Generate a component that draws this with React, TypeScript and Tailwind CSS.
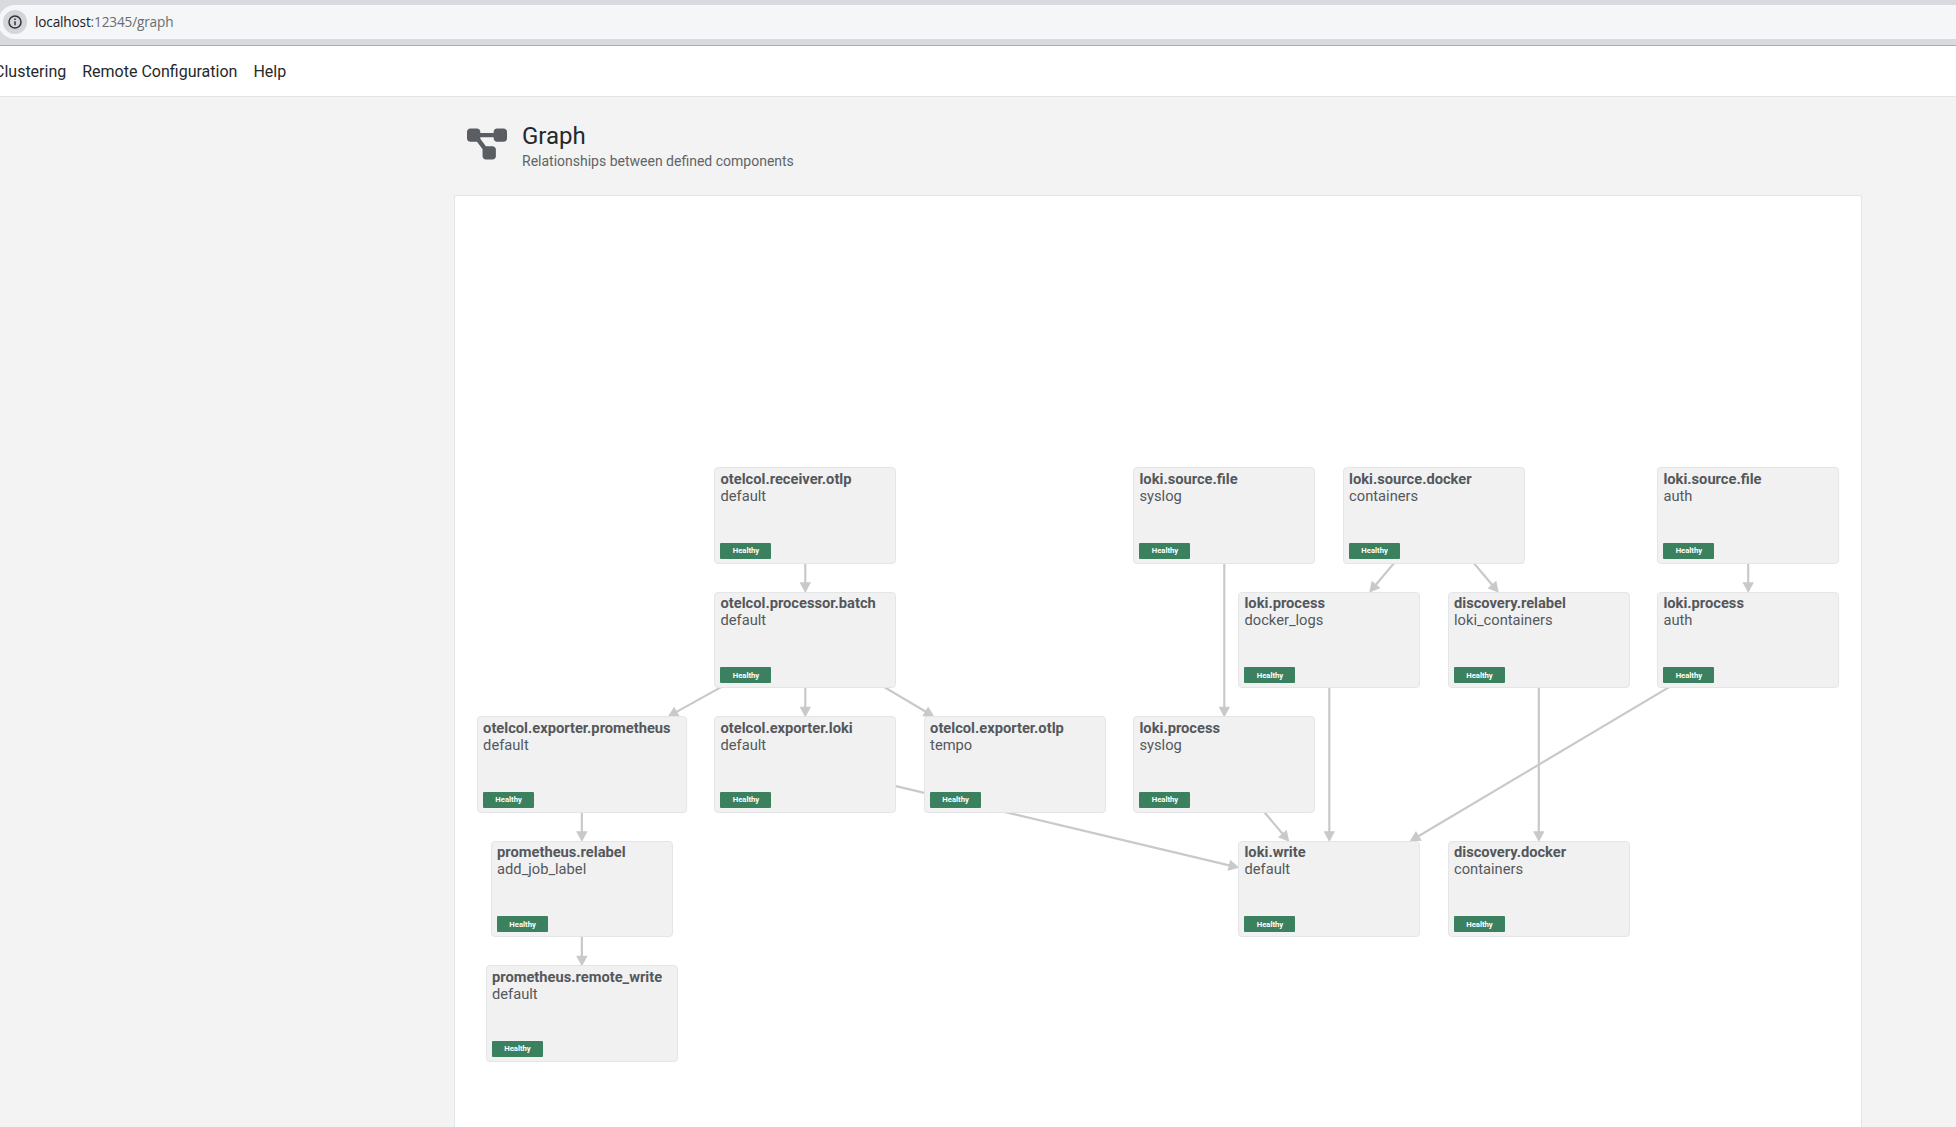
import React from "react";
import { FaDiagramProject } from "react-icons/fa6";

type GraphNode = {
  id: string;
  name: string;
  label: string;
  x: number;
  y: number;
  w: number;
};

const NODE_HEIGHT = 96.7;
const ROWS = [271.3, 395.8, 520.3, 644.8, 769.3];

// Coordinates are relative to the inside of the graph panel.
const nodes: GraphNode[] = [
  { id: "receiver", name: "otelcol.receiver.otlp", label: "default", x: 259.2, y: ROWS[0], w: 182.2 },
  { id: "srcSyslog", name: "loki.source.file", label: "syslog", x: 678.2, y: ROWS[0], w: 182.2 },
  { id: "srcDocker", name: "loki.source.docker", label: "containers", x: 887.8, y: ROWS[0], w: 182.2 },
  { id: "srcAuth", name: "loki.source.file", label: "auth", x: 1202.1, y: ROWS[0], w: 182.2 },
  { id: "batch", name: "otelcol.processor.batch", label: "default", x: 259.2, y: ROWS[1], w: 182.2 },
  { id: "procDocker", name: "loki.process", label: "docker_logs", x: 783.2, y: ROWS[1], w: 182.2 },
  { id: "discRelabel", name: "discovery.relabel", label: "loki_containers", x: 992.7, y: ROWS[1], w: 182.2 },
  { id: "procAuth", name: "loki.process", label: "auth", x: 1202.1, y: ROWS[1], w: 182.2 },
  { id: "expProm", name: "otelcol.exporter.prometheus", label: "default", x: 21.8, y: ROWS[2], w: 210 },
  { id: "expLoki", name: "otelcol.exporter.loki", label: "default", x: 259.2, y: ROWS[2], w: 182.2 },
  { id: "expOtlp", name: "otelcol.exporter.otlp", label: "tempo", x: 468.8, y: ROWS[2], w: 182.2 },
  { id: "procSyslog", name: "loki.process", label: "syslog", x: 678.2, y: ROWS[2], w: 182.2 },
  { id: "promRelabel", name: "prometheus.relabel", label: "add_job_label", x: 35.8, y: ROWS[3], w: 182.2 },
  { id: "write", name: "loki.write", label: "default", x: 783.2, y: ROWS[3], w: 182.2 },
  { id: "discDocker", name: "discovery.docker", label: "containers", x: 992.7, y: ROWS[3], w: 182.2 },
  { id: "remoteWrite", name: "prometheus.remote_write", label: "default", x: 30.7, y: ROWS[4], w: 192.3 },
];

const edges: [string, string][] = [
  ["receiver", "batch"],
  ["batch", "expProm"],
  ["batch", "expLoki"],
  ["batch", "expOtlp"],
  ["expProm", "promRelabel"],
  ["promRelabel", "remoteWrite"],
  ["expLoki", "write"],
  ["srcSyslog", "procSyslog"],
  ["procSyslog", "write"],
  ["srcDocker", "procDocker"],
  ["srcDocker", "discRelabel"],
  ["procDocker", "write"],
  ["discRelabel", "discDocker"],
  ["srcAuth", "procAuth"],
  ["procAuth", "write"],
];

const byId = Object.fromEntries(nodes.map((n) => [n.id, n]));

function Edge({ from, to }: { from: GraphNode; to: GraphNode }) {
  const x1 = from.x + from.w / 2;
  const y1 = from.y + NODE_HEIGHT / 2;
  const x2 = to.x + to.w / 2;
  const y2 = to.y + NODE_HEIGHT / 2;
  const dx = x2 - x1;
  const dy = y2 - y1;
  // Stop where the center-to-center line enters the target box.
  const t = Math.min(
    dx === 0 ? Infinity : to.w / 2 / Math.abs(dx),
    dy === 0 ? Infinity : NODE_HEIGHT / 2 / Math.abs(dy),
  );
  const tipX = x2 - dx * t;
  const tipY = y2 - dy * t;
  const angle = (Math.atan2(dy, dx) * 180) / Math.PI;
  const len = Math.hypot(dx, dy);
  return (
    <g fill="#c8c9ca" stroke="none">
      <line x1={x1} y1={y1} x2={tipX - (dx / len) * 6} y2={tipY - (dy / len) * 6} stroke="#c8c9ca" strokeWidth={2.2} />
      <path d="M1.2 0 L-9.6 -5.7 L-9.6 5.7 Z" transform={`translate(${tipX} ${tipY}) rotate(${angle})`} />
    </g>
  );
}

function NodeCard({ node }: { node: GraphNode }) {
  return (
    <div
      className="absolute flex flex-col items-start justify-between rounded-[4px] border border-[#e4e5e6] bg-[#f1f1f1] pt-[2.6px] pb-[4px] pl-[5.3px] text-[#54585c]"
      style={{ left: node.x, top: node.y, width: node.w, height: NODE_HEIGHT }}
    >
      <div className="text-[14.7px] leading-[17px] whitespace-nowrap">
        <div className="font-bold">{node.name}</div>
        <div>{node.label}</div>
      </div>
      <div className="flex h-4 w-[51px] items-center justify-center rounded-[1px] bg-[#3b8160] text-[7.7px] leading-none font-bold text-white">
        Healthy
      </div>
    </div>
  );
}

function AddressBar() {
  return (
    <div className="h-[46px] shrink-0 border-b border-[#a9abb2] bg-[#d9dae0] pt-[5px]">
      <div className="-ml-[2px] flex h-[34px] items-center rounded-l-full bg-[#f4f6f8] pl-[5px]">
        <div className="flex size-6 items-center justify-center rounded-full bg-[#d3d5da]">
          <svg viewBox="0 0 14 14" className="size-3.5" fill="none" stroke="#303236">
            <circle cx="7" cy="7" r="6" strokeWidth="1.5" />
            <path d="M7 6.2v4" strokeWidth="1.5" />
            <path d="M7 3.6v1.5" strokeWidth="1.5" />
          </svg>
        </div>
        <div className="ml-2 font-['Open_Sans',sans-serif] text-[13.6px] leading-5 tracking-[-0.15px] text-[#6a6d71]">
          <span className="text-[#202124]">localhost</span>:12345/graph
        </div>
      </div>
    </div>
  );
}

export default function App() {
  return (
    <div className="flex h-[1127px] w-[1956px] flex-col overflow-hidden bg-[#f3f3f3] font-[Roboto,sans-serif]">
      <AddressBar />
      <nav className="flex h-[51px] shrink-0 items-center gap-4 border-b border-[#e3e4e5] bg-white pt-[2px] text-base text-[#25282c]">
        <span className="-ml-[6px]">Clustering</span>
        <span>Remote Configuration</span>
        <span>Help</span>
      </nav>
      <main className="ml-[454px] flex w-[1408px] grow flex-col">
        <header className="flex h-[98px] shrink-0 items-start pl-[13px]">
          <FaDiagramProject className="mt-[29px] h-9 w-10 text-[#5a5e62]" />
          <div className="mt-[22px] ml-[15px]">
            <h1 className="text-2xl leading-[34px] text-[#24292e]">Graph</h1>
            <p className="text-sm leading-4 text-[#5f6368]">Relationships between defined components</p>
          </div>
        </header>
        <section className="relative grow rounded-t-[3px] border border-b-0 border-[#e3e4e5] bg-white">
          <svg className="absolute inset-0 size-full">
            {edges.map(([a, b]) => (
              <Edge key={`${a}-${b}`} from={byId[a]} to={byId[b]} />
            ))}
          </svg>
          {nodes.map((n) => (
            <NodeCard key={n.id} node={n} />
          ))}
        </section>
      </main>
    </div>
  );
}
